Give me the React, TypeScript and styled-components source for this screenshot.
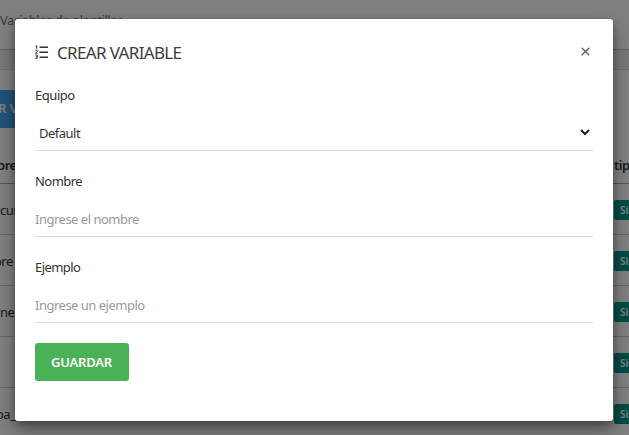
import React from 'react';
import styled, { createGlobalStyle } from 'styled-components';

const Global = createGlobalStyle`
  * { box-sizing: border-box; }
  html, body { margin: 0; overflow: hidden; }
  body { font-family: "Noto Sans", "Open Sans", sans-serif; font-size: 13px; color: #333; }
`;

const Screen = styled.div`
  position: relative;
  width: 629px;
  height: 435px;
  overflow: hidden;
  background: #eee;
`;

const TopBar = styled.header`
  height: 50px;
  padding-top: 10px;
  background: #fff;
  border-bottom: 1px solid #c4c4c4;
  color: #777;
  line-height: 20px;
  letter-spacing: -0.43px;
`;

const Card = styled.section`
  margin-top: 19px;
  height: 380px;
  padding-top: 20px;
  background: #fff;
  border-top: 1px solid #ddd;
`;

const CreateButton = styled.button`
  display: block;
  width: 90px;
  height: 38px;
  padding: 0 0 2px;
  border: 0;
  background: #42a5f5;
  color: #fff;
  font: 600 13px "Noto Sans", sans-serif;
  text-align: left;
  text-indent: -2px;
`;

const Row = styled.div<{ $head?: boolean }>`
  display: grid;
  grid-template-columns: 614px 1fr;
  align-items: center;
  height: ${(p) => (p.$head ? 56 : 51)}px;
  padding-top: ${(p) => (p.$head ? 19 : 2)}px;
  border-bottom: 1px solid ${(p) => (p.$head ? '#aaa' : '#ccc')};
  font-weight: ${(p) => (p.$head ? 600 : 400)};
  letter-spacing: -0.5px;
  white-space: nowrap;
`;

const NameCell = styled.span<{ $shift?: number }>`
  margin-left: ${(p) => p.$shift ?? 0}px;
`;

const Badge = styled.span`
  height: 20px;
  padding-left: 6px;
  border-radius: 2px 0 0 2px;
  background: #009688;
  color: #fff;
  font-size: 10px;
  font-weight: 600;
  line-height: 21px;
  letter-spacing: 0;
`;

const Backdrop = styled.div`
  position: absolute;
  inset: 0;
  display: flex;
  align-items: flex-start;
  padding: 19px 16px 0 15px;
  background: rgba(0, 0, 0, 0.5);
`;

const Dialog = styled.form`
  flex: 1;
  height: 402px;
  padding: 20px;
  border-radius: 3px;
  background: #fff;
  box-shadow: 0 8px 16px rgba(0, 0, 0, 0.4), 0 2px 6px rgba(0, 0, 0, 0.2);
`;

const DialogHeader = styled.div`
  display: flex;
  align-items: center;
  height: 28px;
`;

const Title = styled.h5`
  flex: 1;
  margin: 0 0 0 8px;
  color: #3c3c3c;
  font-size: 17px;
  font-weight: 400;
  line-height: 28px;
  letter-spacing: -0.66px;
`;

const CloseButton = styled.button`
  display: flex;
  padding: 0;
  margin: -3px 3px 0 0;
  border: 0;
  background: none;
  color: #666;
`;

const Field = styled.div`
  height: 86px;
`;

const Label = styled.label<{ $spacing: number }>`
  display: block;
  height: 28px;
  line-height: 20px;
  letter-spacing: ${(p) => p.$spacing}px;
`;

const Control = styled.div`
  display: flex;
  align-items: center;
  height: 38px;
  border-bottom: 1px solid #ddd;
`;

const TextInput = styled.input<{ $spacing: number }>`
  width: 100%;
  height: 37px;
  padding: 2px 0 0;
  border: 0;
  outline: 0;
  background: transparent;
  font: 400 13px "Noto Sans", sans-serif;
  letter-spacing: ${(p) => p.$spacing}px;
  &::placeholder { color: #999; opacity: 1; }
`;

const Selected = styled.span`
  flex: 1;
  padding: 3px 0 0 4px;
  letter-spacing: -0.5px;
`;

const Chevron = styled.svg`
  margin: 1px 3px 0 0;
`;

const Fields = styled.div`
  padding-top: 18px;
`;

const SaveButton = styled.button`
  display: block;
  width: 94px;
  height: 38px;
  padding: 0 1px 0 0;
  border: 0;
  border-radius: 3px;
  background: #4ab156;
  color: #fff;
  font: 600 13px "Noto Sans", sans-serif;
  letter-spacing: -0.2px;
`;

const ListSvg = styled.svg`
  margin-top: -2px;
`;

const ListIcon = () => (
  <ListSvg width="14" height="14" viewBox="0 0 14 14" fill="none" stroke="#333">
    <path d="M4.5 2.3H13M4.5 7.3H13M4.5 12.3H13" strokeWidth="1.5" />
    <path d="M.6 1.2 1.7.6V3.8M.4 5.3h1.8v1.3L.6 8.3h1.9M.4 10.1h1.8v3.2H.4M.9 11.7h1.4" strokeWidth="1" />
  </ListSvg>
);

const rows = [
  { name: 'cur', shift: 0 },
  { name: 'ore', shift: -6 },
  { name: 'ne', shift: 0 },
  { name: '', shift: 0 },
  { name: 'oa_', shift: -4 },
];

const fields = [
  { label: 'Nombre', placeholder: 'Ingrese el nombre', labelSpacing: -0.55, spacing: -0.5 },
  { label: 'Ejemplo', placeholder: 'Ingrese un ejemplo', labelSpacing: -0.55, spacing: -0.5 },
];

export default function App() {
  return (
    <Screen>
      <Global />
      <TopBar>Variables de plantillas</TopBar>
      <Card>
        <CreateButton>R V</CreateButton>
        <Row $head>
          <NameCell $shift={-3}>bre</NameCell>
          <span>tip</span>
        </Row>
        {rows.map((row, i) => (
          <Row key={i}>
            <NameCell $shift={row.shift}>{row.name}</NameCell>
            <Badge>Sis</Badge>
          </Row>
        ))}
      </Card>
      <Backdrop>
        <Dialog onSubmit={(e) => e.preventDefault()}>
          <DialogHeader>
            <ListIcon />
            <Title>CREAR VARIABLE</Title>
            <CloseButton type="button" aria-label="Cerrar">
              <svg width="9" height="9" viewBox="0 0 9 9" stroke="currentColor" strokeWidth="1.4">
                <path d="m.7.7 7.6 7.6M8.3.7.7 8.3" />
              </svg>
            </CloseButton>
          </DialogHeader>
          <Fields>
            <Field>
              <Label $spacing={-0.45}>Equipo</Label>
              <Control>
                <Selected>Default</Selected>
                <Chevron width="10" height="7" viewBox="0 0 10 7" fill="none" stroke="#222" strokeWidth="2">
                  <path d="m1 1 4 4 4-4" />
                </Chevron>
              </Control>
            </Field>
            {fields.map((f) => (
              <Field key={f.label}>
                <Label $spacing={f.labelSpacing}>{f.label}</Label>
                <Control>
                  <TextInput $spacing={f.spacing} placeholder={f.placeholder} />
                </Control>
              </Field>
            ))}
          </Fields>
          <SaveButton>GUARDAR</SaveButton>
        </Dialog>
      </Backdrop>
    </Screen>
  );
}
